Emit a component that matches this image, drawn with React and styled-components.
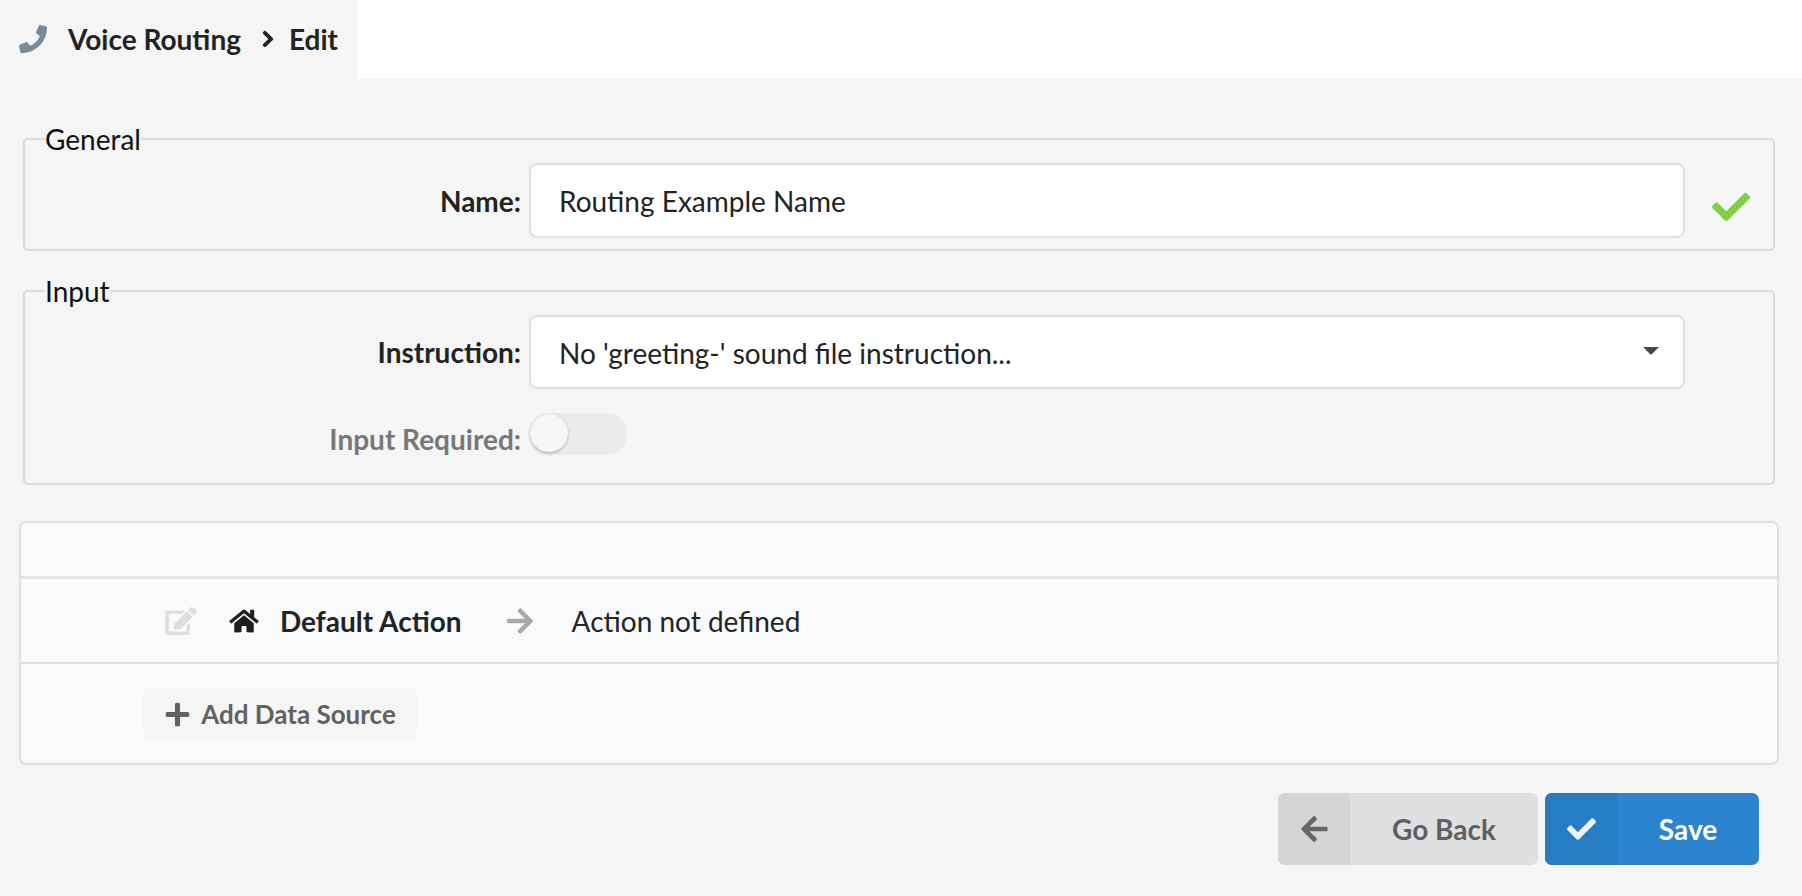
import React from "react";
import styled, { createGlobalStyle } from "styled-components";
import {
  FaArrowLeft,
  FaArrowRight,
  FaCheck,
  FaChevronRight,
  FaEdit,
  FaHome,
  FaPhone,
  FaPlus,
} from "react-icons/fa";

const GlobalStyle = createGlobalStyle`
  html, body {
    margin: 0;
    background: #f5f5f5;
    font-family: Lato, "Liberation Sans", sans-serif;
    color: #1f1f1f;
  }
  * {
    box-sizing: border-box;
  }
`;

const App = () => {
  return (
    <Page>
      <GlobalStyle />
      <TopBar>
        <Crumbs>
          <PhoneIcon />
          <CrumbText>Voice Routing</CrumbText>
          <CrumbArrow />
          <CrumbText>Edit</CrumbText>
        </Crumbs>
      </TopBar>
      <Content>
        <Group>
          <Legend>General</Legend>
          <FieldRow>
            <FieldLabel>Name:</FieldLabel>
            <TextBox type="text" defaultValue="Routing Example Name" />
            <ValidIcon />
          </FieldRow>
        </Group>
        <Group $input>
          <Legend>Input</Legend>
          <FieldRow>
            <FieldLabel>Instruction:</FieldLabel>
            <SelectBox>
              No 'greeting-' sound file instruction...
              <Caret />
            </SelectBox>
          </FieldRow>
          <ToggleRow>
            <FieldLabel $muted>Input Required:</FieldLabel>
            <Toggle>
              <Knob />
            </Toggle>
          </ToggleRow>
        </Group>
        <Panel>
          <PanelHead />
          <ActionRow>
            <EditIcon />
            <HomeIcon />
            <ActionName>Default Action</ActionName>
            <ActionArrow />
            <ActionValue>Action not defined</ActionValue>
          </ActionRow>
          <PanelFoot>
            <AddButton>
              <FaPlus />
              Add Data Source
            </AddButton>
          </PanelFoot>
        </Panel>
        <Actions>
          <LabeledButton>
            <ButtonIcon>
              <FaArrowLeft />
            </ButtonIcon>
            <ButtonText>Go Back</ButtonText>
          </LabeledButton>
          <LabeledButton $primary>
            <ButtonIcon $primary>
              <FaCheck />
            </ButtonIcon>
            <ButtonText>Save</ButtonText>
          </LabeledButton>
        </Actions>
      </Content>
    </Page>
  );
};

const Page = styled.div`
  min-height: 896px;
  background: #f5f5f5;
`;

const TopBar = styled.header`
  height: 79px;
  background: #fff;
`;

const Crumbs = styled.div`
  width: 358px;
  height: 79px;
  padding: 0 0 1px 19px;
  display: flex;
  align-items: center;
  background: #f5f5f5;
`;

const PhoneIcon = styled(FaPhone)`
  width: 28px;
  height: 28px;
  margin-right: 21px;
  color: #768a9c;
`;

const CrumbText = styled.span`
  font-size: 28px;
  font-weight: 700;
  color: #232323;
`;

const CrumbArrow = styled(FaChevronRight)`
  width: 16px;
  height: 18px;
  margin: 0 13px 0 19px;
  color: #232323;
  stroke: currentColor;
  stroke-width: 30;
`;

const Content = styled.main`
  padding-top: 44px;
`;

const Group = styled.fieldset`
  margin: ${(props) => (props.$input ? "24px" : "0")} 27px 0 23px;
  padding: 0 0 ${(props) => (props.$input ? "28px" : "11px")};
  min-width: 0;
  border: 2px solid #dadada;
  border-radius: 5px;
`;

const Legend = styled.legend`
  margin-left: 20px;
  padding: 1px 0 0;
  font-size: 28px;
  line-height: 31px;
  color: #111;
`;

const FieldRow = styled.div`
  display: grid;
  grid-template-columns: 496px 1156px 1fr;
  column-gap: 8px;
  align-items: center;
  padding-top: 8px;
`;

const ToggleRow = styled(FieldRow)`
  padding-top: 24px;
`;

const FieldLabel = styled.label`
  text-align: right;
  font-size: 28px;
  font-weight: 700;
  line-height: ${(props) => (props.$muted ? "32px" : "34px")};
  align-self: ${(props) => (props.$muted ? "end" : "center")};
  color: ${(props) => (props.$muted ? "#77787a" : "#232323")};
`;

const TextBox = styled.input`
  width: 100%;
  height: 75px;
  padding: 0 28px;
  border: 2px solid #dfdfdf;
  border-radius: 8px;
  background: #fff;
  outline: none;
  font: 400 28px Lato, "Liberation Sans", sans-serif;
  color: #232323;
`;

const SelectBox = styled.div`
  position: relative;
  height: 74px;
  padding: 2px 28px 0;
  display: flex;
  align-items: center;
  border: 2px solid #dfdfdf;
  border-radius: 8px;
  background: #fff;
  font-size: 28px;
  color: #232323;
`;

const Caret = styled.span`
  position: absolute;
  right: 24px;
  top: 30px;
  border-style: solid;
  border-width: 8px 8px 0;
  border-color: #484848 transparent transparent;
`;

const ValidIcon = styled(FaCheck)`
  width: 38px;
  height: 38px;
  margin: 13px 0 0 19px;
  color: #80d047;
`;

const Toggle = styled.div`
  position: relative;
  width: 98px;
  height: 42px;
  border-radius: 21px;
  background: #ebebeb;
`;

const Knob = styled.span`
  position: absolute;
  top: 1px;
  left: 1px;
  width: 38px;
  height: 38px;
  border-radius: 50%;
  background: #f6f6f6;
  box-shadow: 0 2px 3px rgba(0, 0, 0, 0.18), 0 0 0 1px rgba(0, 0, 0, 0.04);
`;

const Panel = styled.section`
  margin: 36px 23px 0 19px;
  border: 2px solid #dedfe0;
  border-radius: 7px;
  background: #f9fafc;
`;

const PanelHead = styled.div`
  height: 56px;
  border-bottom: 3px solid #e3e4e6;
`;

const ActionRow = styled.div`
  height: 85px;
  padding-left: 144px;
  display: flex;
  align-items: center;
  border-bottom: 2px solid #dedfe0;
`;

const EditIcon = styled(FaEdit)`
  width: 32px;
  height: 28px;
  margin-right: 31px;
  color: #dcdddf;
`;

const HomeIcon = styled(FaHome)`
  width: 32px;
  height: 26px;
  margin-right: 20px;
  color: #1f1f1f;
`;

const ActionName = styled.span`
  font-size: 28px;
  font-weight: 700;
  color: #232323;
`;

const ActionArrow = styled(FaArrowRight)`
  width: 26px;
  height: 30px;
  margin: 0 39px 0 45px;
  color: #a9a9a9;
`;

const ActionValue = styled.span`
  font-size: 28px;
  color: #232323;
`;

const PanelFoot = styled.div`
  height: 99px;
  padding: 23px 0 0 122px;
`;

const AddButton = styled.button`
  height: 54px;
  width: 274px;
  padding: 0;
  display: flex;
  align-items: center;
  justify-content: center;
  gap: 10px;
  border: none;
  border-radius: 7px;
  background: #f5f5f5;
  font: 700 26px Lato, "Liberation Sans", sans-serif;
  color: #626262;

  svg {
    width: 27px;
    height: 27px;
  }
`;

const Actions = styled.div`
  margin-top: 28px;
  padding-right: 43px;
  display: flex;
  justify-content: flex-end;
  gap: 7px;
`;

const LabeledButton = styled.button`
  height: 72px;
  width: ${(props) => (props.$primary ? "214px" : "260px")};
  padding: 0;
  display: flex;
  align-items: stretch;
  border: none;
  border-radius: 7px;
  overflow: hidden;
  background: ${(props) => (props.$primary ? "#2b84cd" : "#dfe0e2")};
  font: 700 28px Lato, "Liberation Sans", sans-serif;
  color: ${(props) => (props.$primary ? "#fff" : "#5f5f5f")};
`;

const ButtonIcon = styled.span`
  width: 72px;
  display: flex;
  align-items: center;
  justify-content: center;
  background: ${(props) => (props.$primary ? "#277dc2" : "#d4d5d7")};
  color: ${(props) => (props.$primary ? "#eef5fb" : "#666")};

  svg {
    width: ${(props) => (props.$primary ? "29px" : "27px")};
    height: 30px;
  }
`;

const ButtonText = styled.span`
  flex: 1;
  display: flex;
  align-items: center;
  justify-content: center;
`;

export default App;
